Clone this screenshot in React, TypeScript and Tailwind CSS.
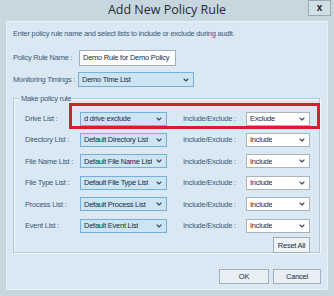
import { ChevronDown } from 'lucide-react';

const rows = [
  { label: 'Drive List', value: 'd drive exclude', mode: 'Exclude' },
  { label: 'Directory List', value: 'Default Directory List', mode: 'Include' },
  { label: 'File Name List', value: 'Default File Name List', mode: 'Include' },
  { label: 'File Type List', value: 'Default File Type List', mode: 'Include' },
  { label: 'Process List', value: 'Default Process List', mode: 'Include' },
  { label: 'Event List', value: 'Default Event List', mode: 'Include' },
];

// fake combo box, blue when it holds a list, white for include/exclude
function Combo({ value, width, blue }: { value: string; width: string; blue?: boolean }) {
  return (
    <div
      className={`flex h-[14px] shrink-0 items-center justify-between border px-[3px] ${width} ${
        blue ? 'border-[#74b0da] bg-[#cde4f3]' : 'border-[#a9b4bd] bg-white'
      }`}
    >
      <span className="truncate leading-none text-[#1b2c44]">{value}</span>
      <ChevronDown className="h-[8px] w-[8px] shrink-0 text-[#3c4a5a]" strokeWidth={3.5} />
    </div>
  );
}

export default function App() {
  return (
    <div
      className="flex h-[296px] w-[334px] flex-col bg-[#c6d7e0] whitespace-nowrap"
      style={{ fontFamily: '"Liberation Sans", Arial, sans-serif' }}
    >
      {/* title bar */}
      <div className="relative flex h-[21px] shrink-0 items-center justify-center">
        <span className="text-[12.5px] text-[#1f2b38]" style={{ fontFamily: '"Open Sans", sans-serif' }}>
          Add New Policy Rule
        </span>
        <div className="absolute right-[3px] top-0 flex h-[16px] w-[23px] items-center justify-center border border-[#9aa9b3] bg-[#d3dfe6]">
          <span className="text-[10px] font-bold leading-none text-[#1a1a1a]">x</span>
        </div>
      </div>

      {/* body */}
      <div className="mx-[6px] mb-[6px] flex flex-1 flex-col border border-[#e9f1f8] bg-[#dae8f4] px-[6px] text-[7.5px] tracking-[-0.25px] text-[#3d5878]">
        <div className="mt-[7px] leading-[10px]">
          Enter policy rule name and select lists to include or exclude during audit.
        </div>

        <div className="mt-[11px] flex h-[16px] items-center">
          <span className="w-[66px]">Policy Rule Name :</span>
          <div className="flex h-[16px] w-[97px] items-center border border-[#a3afba] bg-white px-[3px] text-[#1b2c44]">
            Demo Rule for Demo Policy
          </div>
        </div>

        <div className="mt-[6px] flex h-[15px] items-center">
          <span className="w-[65px]">Monitoring Timings :</span>
          <div className="flex h-[15px] w-[116px] items-center justify-between border border-[#74b0da] bg-[#cde4f3] px-[3px] text-[#1b2c44]">
            <span>Demo Time List</span>
            <ChevronDown className="h-[8px] w-[8px] text-[#3c4a5a]" strokeWidth={3.5} />
          </div>
        </div>

        {/* group box */}
        <div className="relative mr-[1px] mt-[11px] h-[155px] border border-[#b5c6d4] shadow-[1px_1px_0_#f3f8fc,inset_1px_1px_0_#f3f8fc]">
          <span className="absolute -top-[6px] left-[5px] bg-[#dae8f4] px-[2px]">Make policy rule</span>

          {/* highlight around the drive list row */}
          <div className="absolute left-[55px] right-[-1px] top-[4px] h-[26px] border-[3px] border-[#d4202a]" />

          <div className="flex flex-col pt-[9px]">
            {rows.map((row) => (
              <div key={row.label} className="flex h-[21.4px] items-center pl-[11px]">
                <span className="w-[55px]">{row.label} :</span>
                <Combo value={row.value} width="w-[87px]" blue />
                <span className="ml-[16px] w-[63px]">Include/Exclude :</span>
                <Combo value={row.mode} width="w-[64px]" />
              </div>
            ))}
          </div>

          <div className="flex justify-end pr-[9px] pt-[1px]">
            <div className="flex h-[16px] w-[37px] items-center justify-center border border-[#9eadb9] bg-[#eef3f7] text-[#1b2c44]">
              Reset All
            </div>
          </div>
        </div>

        {/* footer */}
        <div className="mt-[16px] flex justify-end gap-[4px]">
          <div className="flex h-[15px] w-[50px] items-center justify-center border border-[#a2b0bb] bg-[#e9eff4] text-[#1b2c44]">
            OK
          </div>
          <div className="flex h-[15px] w-[48px] items-center justify-center border border-[#a2b0bb] bg-[#e9eff4] text-[#1b2c44]">
            Cancel
          </div>
        </div>
      </div>
    </div>
  );
}
